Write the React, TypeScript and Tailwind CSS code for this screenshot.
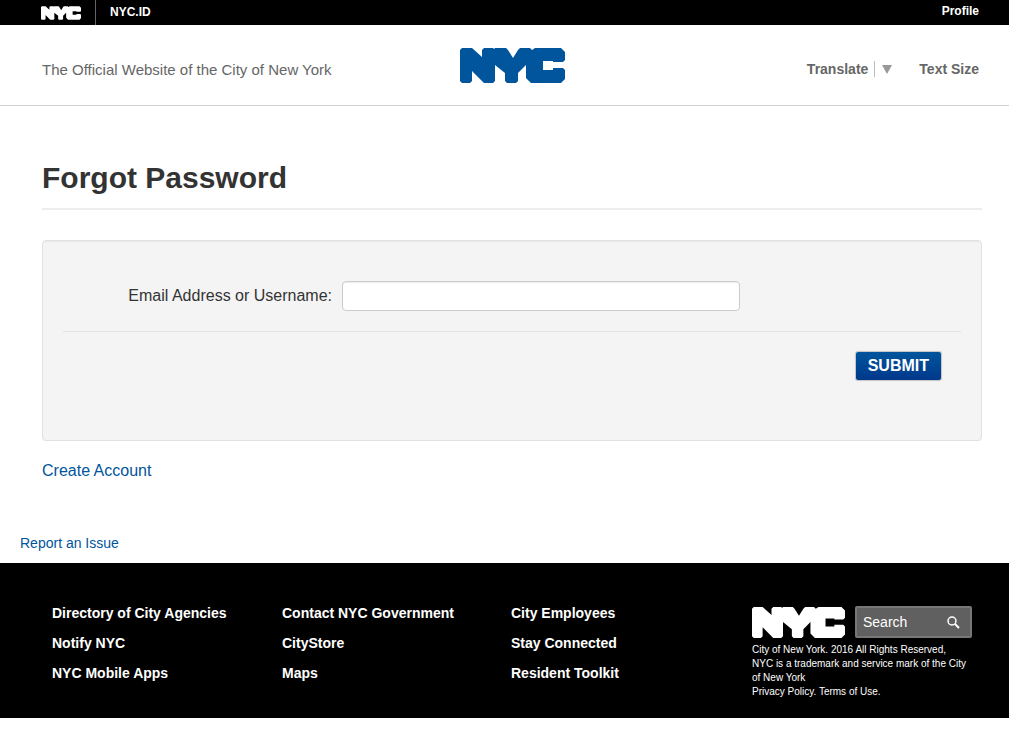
import React from 'react';

interface LogoProps {
  className?: string;
}

const footerColumns = [
  ['Directory of City Agencies', 'Notify NYC', 'NYC Mobile Apps'],
  ['Contact NYC Government', 'CityStore', 'Maps'],
  ['City Employees', 'Stay Connected', 'Resident Toolkit'],
];

const NycLogo: React.FC<LogoProps> = ({ className }) => (
  <svg viewBox="0 0 105 35" className={className} fill="currentColor" role="img" aria-label="NYC">
    <path d="M2 0H12L22 9V2L24 0H33L34 1L35 0H46L48 2L53 10L58 2L60 0H70L72 2L75 0H101L105 4V12L103 14H93V13H83V22H93V20H103L105 22V31L101 35H71L66 30V17L58 25V33L56 35H47L45 33V25L35 17V33L33 35H24L12 23V33L10 35H2L0 33V2Z" />
  </svg>
);

// Slim black bar shared by all city sites
const TopBar: React.FC = () => (
  <div className="flex h-[25px] items-center bg-black pl-[41px] pr-[30px] text-xs font-bold text-white">
    <a href="#" className="flex h-full items-center border-r border-[#666] pr-3.5">
      <NycLogo className="h-[14px] w-10" />
    </a>
    <a href="#" className="pb-0.5 pl-3.5">NYC.ID</a>
    <a href="#" className="ml-auto pb-1">Profile</a>
  </div>
);

const Header: React.FC = () => (
  <header className="grid h-[81px] grid-cols-[1fr_auto_1fr] items-center border-b border-[#d2d2d2] pl-[42px] pr-[27px] text-[#666]">
    <p className="pt-2.5 text-[15px]">The Official Website of the City of New York</p>
    <a href="#" className="text-[#00559c]">
      <NycLogo className="h-[35px] w-[105px]" />
    </a>
    <div className="flex items-center justify-end pr-[3px] pt-2 text-sm font-bold">
      <button type="button" className="flex items-center">
        Translate
        <span className="ml-1.5 flex h-4 items-center border-l border-[#bbb] pl-[7px]">
          <svg viewBox="0 0 10 9" className="h-[9px] w-2.5" fill="#999" aria-hidden="true">
            <path d="M0 0H10L5 9Z" />
          </svg>
        </span>
      </button>
      <a href="#" className="ml-[27px]">Text Size</a>
    </div>
  </header>
);

const ForgotPasswordForm: React.FC = () => (
  <form
    className="mt-[30px] min-h-[201px] rounded border border-[#e1e1e1] bg-[#f4f4f4] px-5 pt-10 shadow-[inset_0_1px_1px_rgba(0,0,0,0.05)]"
    onSubmit={(e) => e.preventDefault()}
  >
    <div className="flex items-center border-b border-[#e3e3e3] pb-5">
      <label htmlFor="email" className="w-[279px] pr-2.5 text-right text-base leading-5 text-[#333]">
        Email Address or Username:
      </label>
      <input
        id="email"
        type="text"
        className="h-[30px] w-[398px] rounded border border-[#ccc] bg-white px-2 shadow-[inset_0_1px_1px_rgba(0,0,0,0.075)]"
      />
    </div>
    <div className="flex justify-end pr-5 pt-5">
      <button
        type="submit"
        className="h-7 rounded-xs bg-linear-to-b from-[#00559c] to-[#00388c] px-3 text-base leading-7 font-bold text-white shadow-[0_0_1px_1px_rgba(0,0,0,0.2)]"
      >
        SUBMIT
      </button>
    </div>
  </form>
);

const Footer: React.FC = () => (
  <footer className="grid min-h-[155px] grid-cols-[230fr_229fr_241fr_220fr] bg-black pl-[52px] pr-[37px] text-white">
    {footerColumns.map((links) => (
      <ul key={links[0]} className="pt-[35px] text-sm leading-[30px] font-bold">
        {links.map((link) => (
          <li key={link}>
            <a href="#">{link}</a>
          </li>
        ))}
      </ul>
    ))}
    <div className="pt-[43px]">
      <div className="flex items-center gap-2.5">
        <NycLogo className="h-[31px] w-[93px] shrink-0" />
        <div className="flex h-8 min-w-0 flex-1 items-center rounded-xs border-2 border-[#777] bg-[#606060] px-1.5">
          <input
            type="text"
            aria-label="Search"
            placeholder="Search"
            className="w-full min-w-0 bg-transparent text-sm text-white placeholder:text-white"
          />
          <button type="button" aria-label="Submit search" className="pr-1">
            <svg viewBox="0 0 13 13" className="h-[13px] w-[13px]" fill="none" stroke="white" aria-hidden="true">
              <circle cx="5" cy="5" r="4" strokeWidth="1.5" />
              <path d="M8 8L12 12" strokeWidth="2" />
            </svg>
          </button>
        </div>
      </div>
      <p className="pt-[5px] text-[10px] leading-[14px]">
        City of New York. 2016 All Rights Reserved,
        <br />
        NYC is a trademark and service mark of the City of New York
        <br />
        <a href="#">Privacy Policy.</a> <a href="#">Terms of Use.</a>
      </p>
    </div>
  </footer>
);

const App: React.FC = () => {
  return (
    <div className="bg-white font-['Liberation_Sans',Arial,sans-serif]">
      <TopBar />
      <Header />
      <main className="pl-[42px] pr-[27px] pt-[52px]">
        <h1 className="border-b-2 border-[#eee] pb-2.5 text-3xl leading-10 font-bold text-[#333]">Forgot Password</h1>
        <ForgotPasswordForm />
        <a href="#" className="mt-5 inline-block text-base leading-5 text-[#00559c]">
          Create Account
        </a>
      </main>
      <div className="px-5 pt-[50px] pb-2.5 text-sm leading-5">
        <a href="#" className="text-[#00559c]">Report an Issue</a>
      </div>
      <Footer />
    </div>
  );
};

export default App;
